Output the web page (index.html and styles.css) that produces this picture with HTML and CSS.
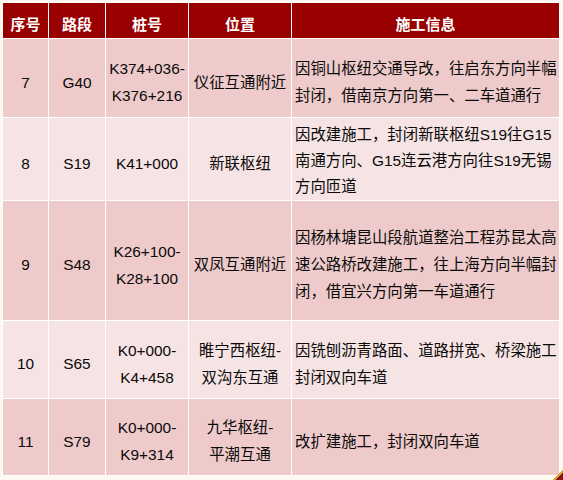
FILE: index.html
```html
<!DOCTYPE html>
<html lang="zh-CN">
<head>
<meta charset="utf-8">
<title>施工信息</title>
<link rel="stylesheet" href="styles.css">
</head>
<body>
<div class="page">
  <table class="roadwork">
    <colgroup>
      <col class="c-no">
      <col class="c-road">
      <col class="c-pile">
      <col class="c-pos">
      <col class="c-info">
    </colgroup>
    <thead>
      <tr class="head">
        <th>序号</th>
        <th>路段</th>
        <th>桩号</th>
        <th>位置</th>
        <th>施工信息</th>
      </tr>
    </thead>
    <tbody>
      <tr class="row dark r7">
        <td>7</td>
        <td>G40</td>
        <td>K374+036-<br>K376+216</td>
        <td>仪征互通附近</td>
        <td class="info">因铜山枢纽交通导改，往启东方向半幅<br>封闭，借南京方向第一、二车道通行</td>
      </tr>
      <tr class="row light r8">
        <td>8</td>
        <td>S19</td>
        <td>K41+000</td>
        <td>新联枢纽</td>
        <td class="info">因改建施工，封闭新联枢纽S19往G15<br>南通方向、G15连云港方向往S19无锡<br>方向匝道</td>
      </tr>
      <tr class="row dark r9">
        <td>9</td>
        <td>S48</td>
        <td>K26+100-<br>K28+100</td>
        <td>双凤互通附近</td>
        <td class="info">因杨林塘昆山段航道整治工程苏昆太高<br>速公路桥改建施工，往上海方向半幅封<br>闭，借宜兴方向第一车道通行</td>
      </tr>
      <tr class="row light r10">
        <td>10</td>
        <td>S65</td>
        <td>K0+000-<br>K4+458</td>
        <td>睢宁西枢纽-<br>双沟东互通</td>
        <td class="info">因铣刨沥青路面、道路拼宽、桥梁施工<br>封闭双向车道</td>
      </tr>
      <tr class="row dark r11">
        <td>11</td>
        <td>S79</td>
        <td>K0+000-<br>K9+314</td>
        <td>九华枢纽-<br>平潮互通</td>
        <td class="info">改扩建施工，封闭双向车道</td>
      </tr>
    </tbody>
  </table>
  <div class="corner"></div>
</div>
</body>
</html>
```

FILE: styles.css
```css
html, body {
  margin: 0;
  padding: 0;
  background: #fdf9ee;
}

.page {
  position: relative;
  width: 563px;
  height: 480px;
  padding: 2px 0 0 2px;
  box-sizing: border-box;
  overflow: hidden;
}

.roadwork {
  table-layout: fixed;
  border-collapse: separate;
  border-spacing: 1px;
  background: #ffffff;
  width: 558px;
  font-family: "Liberation Sans", "Noto Sans CJK SC", sans-serif;
  font-size: 15.4px;
  color: #0a0a0a;
}

.c-no { width: 45px; }
.c-road { width: 56px; }
.c-pile { width: 82px; }
.c-pos { width: 102px; }
.c-info { width: 267px; }

.roadwork th,
.roadwork td {
  padding: 8px 0 0 0;
  text-align: center;
  vertical-align: middle;
  white-space: nowrap;
  line-height: 27px;
  box-sizing: border-box;
}

.head th {
  background: #990000;
  color: #ffffff;
  font-weight: bold;
  height: 35px;
  line-height: 26px;
  font-size: 15px;
}

.row.dark td { background: #eecaca; }
.row.light td { background: #f6e4e4; }

.roadwork td.info {
  text-align: left;
  padding-left: 3px;
  overflow: visible;
}

.r7 td { height: 78px; }
.r8 td { height: 82px; }
.r9 td { height: 119px; }
.r10 td { height: 77px; }
.r11 td { height: 76px; }

.roadwork .r8 td.info {
  padding-top: 4px;
  line-height: 26px;
}

.corner {
  position: absolute;
  right: 0;
  bottom: 0;
  width: 10px;
  height: 10px;
  background: linear-gradient(135deg, transparent 0 50%, #d9a441 50% 62%, #8e1414 62% 100%);
}
```
